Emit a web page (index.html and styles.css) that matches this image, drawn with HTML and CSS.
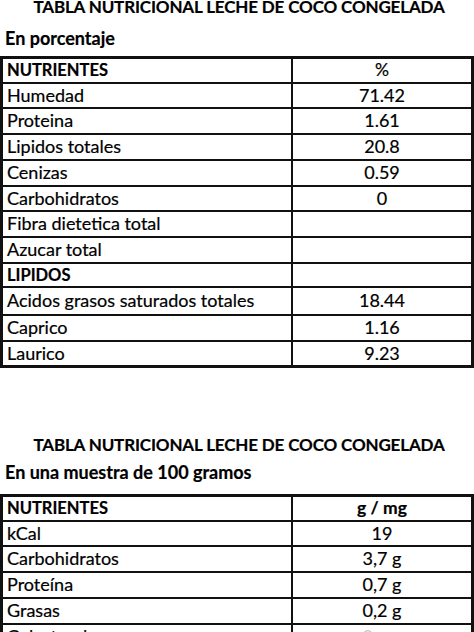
FILE: index.html
```html
<!DOCTYPE html>
<html lang="es">
<head>
<meta charset="utf-8">
<title>Tabla nutricional leche de coco congelada</title>
<link rel="stylesheet" href="styles.css">
</head>
<body>
<div class="page">
  <h1 class="title title-first">TABLA NUTRICIONAL LECHE DE COCO CONGELADA</h1>
  <p class="sub sub-first">En porcentaje</p>
  <div class="tbl tbl-first">
    <div class="row head"><div class="c-label">NUTRIENTES</div><div class="c-val c-plain">%</div></div>
    <div class="row"><div class="c-label">Humedad</div><div class="c-val">71.42</div></div>
    <div class="row"><div class="c-label">Proteina</div><div class="c-val">1.61</div></div>
    <div class="row"><div class="c-label">Lipidos totales</div><div class="c-val">20.8</div></div>
    <div class="row"><div class="c-label">Cenizas</div><div class="c-val">0.59</div></div>
    <div class="row"><div class="c-label">Carbohidratos</div><div class="c-val">0</div></div>
    <div class="row"><div class="c-label">Fibra dietetica total</div><div class="c-val"></div></div>
    <div class="row"><div class="c-label">Azucar total</div><div class="c-val"></div></div>
    <div class="row head"><div class="c-label">LIPIDOS</div><div class="c-val"></div></div>
    <div class="row tall"><div class="c-label">Acidos grasos saturados totales</div><div class="c-val">18.44</div></div>
    <div class="row"><div class="c-label">Caprico</div><div class="c-val">1.16</div></div>
    <div class="row last"><div class="c-label">Laurico</div><div class="c-val">9.23</div></div>
  </div>

  <h1 class="title title-second">TABLA NUTRICIONAL LECHE DE COCO CONGELADA</h1>
  <p class="sub sub-second">En una muestra de 100 gramos</p>
  <div class="tbl tbl-second">
    <div class="row head"><div class="c-label">NUTRIENTES</div><div class="c-val">g / mg</div></div>
    <div class="row"><div class="c-label">kCal</div><div class="c-val">19</div></div>
    <div class="row"><div class="c-label">Carbohidratos</div><div class="c-val">3,7 g</div></div>
    <div class="row"><div class="c-label">Proteína</div><div class="c-val">0,7 g</div></div>
    <div class="row"><div class="c-label">Grasas</div><div class="c-val">0,2 g</div></div>
    <div class="row"><div class="c-label">Colesterol</div><div class="c-val c-faint">0 mg</div></div>
  </div>
</div>
</body>
</html>
```
FILE: styles.css
```css
html, body {
  margin: 0;
  padding: 0;
  background: #ffffff;
}
body {
  font-family: Lato, "Open Sans", sans-serif;
  color: #000000;
  width: 474px;
  height: 632px;
  overflow: hidden;
  -webkit-text-stroke: 0.2px #000;
}
.page {
  display: flex;
  flex-direction: column;
}
.title {
  margin: 0;
  font-size: 17px;
  font-weight: 700;
  line-height: 22px;
  text-align: center;
  padding-left: 4px;
  letter-spacing: -0.15px;
  white-space: nowrap;
}
.title-first { margin-top: -4px; }
.title-second { margin-top: 66px; }
.sub {
  margin: 0;
  font-size: 18px;
  font-weight: 700;
  line-height: 22px;
  padding-left: 5px;
  white-space: nowrap;
}
.sub-first { margin-top: 9px; }
.sub-second { margin-top: 5px; }
.tbl {
  border: 3px solid #111;
  display: flex;
  flex-direction: column;
}
.tbl-first { margin-top: 7px; }
.tbl-second { margin-top: 11.5px; }
.row {
  display: grid;
  grid-template-columns: 288px 1fr;
  height: 25.75px;
  box-sizing: border-box;
  border-bottom: 2px solid #111;
  font-size: 18px;
  line-height: 23.75px;
}
.row.head { height: 24.5px; font-weight: 700; font-size: 16.5px; line-height: 22.5px; }
.row.tall { height: 27.7px; line-height: 25.7px; }
.row.last { height: 23px; border-bottom: 0; line-height: 23px; }
.c-label {
  padding-left: 4px;
  white-space: nowrap;
}
.c-val {
  border-left: 2px solid #111;
  text-align: center;
  white-space: nowrap;
}
.c-plain { font-weight: 400; font-size: 18px; }
.head .c-val { font-size: 17.5px; }
.c-faint { color: #c4c4c4; -webkit-text-stroke: 0; }
```
